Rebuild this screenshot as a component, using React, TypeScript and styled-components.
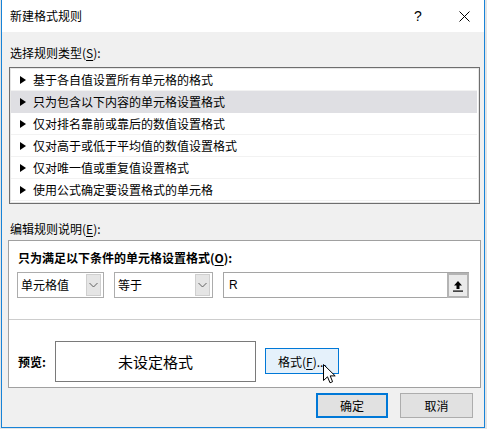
import React from "react";
import styled, { createGlobalStyle } from "styled-components";

const GlobalStyle = createGlobalStyle`
    html, body {
        margin: 0;
        padding: 0;
        background: #e4e4e4;
    }
    body {
        font-family: "Noto Sans CJK SC", "Microsoft YaHei", "Liberation Sans", sans-serif;
        font-size: 12px;
        color: #000;
    }
    u {
        text-underline-offset: 2px;
    }
`;

const Window = styled.div`
    box-sizing: border-box;
    width: 484px;
    height: 428px;
    margin-left: 1px;
    border: 1px solid #1883d7;
    border-top: none;
    background: #f0f0f0;
    display: flex;
    flex-direction: column;
`;

const TitleBar = styled.div`
    height: 32px;
    flex: none;
    background: #fff;
    display: flex;
    align-items: center;
    padding-left: 8px;
`;

const Title = styled.span`
    font-size: 12px;
    line-height: 18px;
    flex: 1;
`;

const TitleButton = styled.div<{ $width: number }>`
    width: ${props => props.$width}px;
    height: 32px;
    display: flex;
    align-items: center;
    justify-content: center;
    font-family: "Liberation Sans", sans-serif;
    font-size: 14px;
`;

const Body = styled.div`
    flex: 1;
    display: flex;
    flex-direction: column;
    padding: 0 4px 9px 7px;
`;

const SectionLabel = styled.div<{ $top: number }>`
    margin-top: ${props => props.$top}px;
    padding-left: 1px;
    line-height: 18px;
    height: 18px;
`;

const RuleList = styled.div`
    box-sizing: border-box;
    margin-top: 5px;
    width: 471px;
    height: 137px;
    border: 1px solid #6e6e6e;
    box-shadow: inset 0 0 0 1px #e6e6e6;
    background: #fff;
    padding: 1px 2px 0 1px;
`;

const RuleRow = styled.div<{ $selected?: boolean }>`
    box-sizing: border-box;
    height: 22px;
    display: flex;
    align-items: center;
    padding-left: 9px;
    gap: 6px;
    background: ${props => props.$selected ? '#dfdfe3' : '#fff'};
    border-bottom: 1px solid ${props => props.$selected ? '#dfdfe3' : '#f2f2f2'};
    white-space: nowrap;
`;

const Arrow = styled.span`
    width: 0;
    height: 0;
    border-top: 4px solid transparent;
    border-bottom: 4px solid transparent;
    border-left: 6px solid #000;
    margin-right: 1px;
`;

const EditPanel = styled.div`
    box-sizing: border-box;
    margin-top: 2px;
    margin-left: -1px;
    width: 473px;
    height: 148px;
    border: 1px solid #a0a0a0;
    background: #fff;
    padding: 8px 11px 5px 9px;
    display: flex;
    flex-direction: column;
`;

const PanelHeading = styled.div`
    font-weight: bold;
    line-height: 18px;
    height: 18px;
`;

const ConditionRow = styled.div`
    margin-top: 5px;
    display: flex;
    gap: 10px;
    margin-left: -1px;
`;

const Combo = styled.div<{ $width: number }>`
    box-sizing: border-box;
    width: ${props => props.$width}px;
    height: 26px;
    border: 1px solid #acacac;
    background: #fff;
    display: flex;
    align-items: center;
    padding: 1px 2px 1px 3px;
`;

const ComboText = styled.span`
    flex: 1;
    line-height: 18px;
`;

const DropButton = styled.div`
    box-sizing: border-box;
    width: 15px;
    height: 22px;
    background: #e5e5e5;
    border: 1px solid #cfcfcf;
    display: flex;
    align-items: center;
    justify-content: center;
`;

const ValueInput = styled.div`
    box-sizing: border-box;
    flex: 1;
    height: 26px;
    border: 1px solid #a5a5a5;
    border-right: none;
    display: flex;
    align-items: center;
    padding-left: 5px;
`;

const ValueText = styled.span`
    flex: 1;
    font-family: "Liberation Sans", sans-serif;
    font-size: 12px;
`;

const RefButton = styled.div`
    box-sizing: border-box;
    width: 22px;
    height: 25px;
    margin-top: 1px;
    border: 2px solid #b4b4b4;
    background: #eaeaea;
    display: flex;
    align-items: center;
    justify-content: center;
`;

const Divider = styled.div`
    height: 1px;
    background: #cdcdcd;
    margin: 21px -11px 0 -9px;
`;

const PreviewRow = styled.div`
    margin-top: 21px;
    display: flex;
    align-items: center;
`;

const PreviewLabel = styled.span`
    width: 37px;
    font-weight: bold;
`;

const PreviewBox = styled.div`
    box-sizing: border-box;
    width: 201px;
    height: 41px;
    border: 1px solid #7a7a7a;
    display: flex;
    align-items: center;
    justify-content: center;
    font-size: 15px;
`;

const FormatButton = styled.div`
    position: relative;
    box-sizing: border-box;
    margin-left: 9px;
    width: 74px;
    height: 26px;
    border: 1px solid #0078d7;
    background: #e5f1fb;
    display: flex;
    align-items: center;
    padding-left: 12px;
    margin-top: -1px;
`;

const Cursor = styled.svg`
    position: absolute;
    left: 57px;
    top: 15px;
`;

const Footer = styled.div`
    margin-top: 5px;
    display: flex;
    justify-content: flex-end;
    gap: 12px;
    padding-right: 7px;
`;

const DialogButton = styled.div<{ $primary?: boolean }>`
    box-sizing: border-box;
    width: ${props => props.$primary ? 72 : 73}px;
    height: 25px;
    border: ${props => props.$primary ? '2px solid #0078d7' : '1px solid #adadad'};
    background: #e1e1e1;
    display: flex;
    align-items: center;
    justify-content: center;
`;

const rules = [
    '基于各自值设置所有单元格的格式',
    '只为包含以下内容的单元格设置格式',
    '仅对排名靠前或靠后的数值设置格式',
    '仅对高于或低于平均值的数值设置格式',
    '仅对唯一值或重复值设置格式',
    '使用公式确定要设置格式的单元格',
];

const Chevron = () => (
    <svg width="9" height="6" viewBox="0 0 9 6">
        <path d="M0.5 1 L4.5 5 L8.5 1" fill="none" stroke="#606060" strokeWidth="1" />
    </svg>
);

const App = () => {
    return (
        <>
            <GlobalStyle />
            <Window>
                <TitleBar>
                    <Title>新建格式规则</Title>
                    <TitleButton $width={52}>?</TitleButton>
                    <TitleButton $width={40}>
                        <svg width="11" height="11" viewBox="0 0 11 11">
                            <path d="M0.5 0.5 L10.5 10.5 M10.5 0.5 L0.5 10.5" stroke="#000" strokeWidth="1" />
                        </svg>
                    </TitleButton>
                </TitleBar>
                <Body>
                    <SectionLabel $top={12}>选择规则类型(<u>S</u>):</SectionLabel>
                    <RuleList>
                        {rules.map((rule, i) => (
                            <RuleRow key={rule} $selected={i === 1}>
                                <Arrow />
                                {rule}
                            </RuleRow>
                        ))}
                    </RuleList>
                    <SectionLabel $top={16}>编辑规则说明(<u>E</u>):</SectionLabel>
                    <EditPanel>
                        <PanelHeading>只为满足以下条件的单元格设置格式(<u>O</u>):</PanelHeading>
                        <ConditionRow>
                            <Combo $width={87}>
                                <ComboText>单元格值</ComboText>
                                <DropButton><Chevron /></DropButton>
                            </Combo>
                            <Combo $width={99}>
                                <ComboText>等于</ComboText>
                                <DropButton><Chevron /></DropButton>
                            </Combo>
                            <ValueInput>
                                <ValueText>R</ValueText>
                                <RefButton>
                                    <svg width="10" height="12" viewBox="0 0 10 12">
                                        <path d="M5 1 L1 5.5 H3.5 V9 H6.5 V5.5 H9 Z" fill="#000" />
                                        <rect x="0" y="10.5" width="10" height="1.2" fill="#000" />
                                    </svg>
                                </RefButton>
                            </ValueInput>
                        </ConditionRow>
                        <Divider />
                        <PreviewRow>
                            <PreviewLabel>预览:</PreviewLabel>
                            <PreviewBox>未设定格式</PreviewBox>
                            <FormatButton>
                                格式(<u>F</u>)...
                                <Cursor width="13" height="20" viewBox="0 0 13 20">
                                    <path d="M0.5 0.5 L0.5 16.5 L4.5 12.8 L7 18.8 L9.6 17.7 L7.2 11.9 L12.2 11.9 Z" fill="#fff" stroke="#000" strokeWidth="1" strokeLinejoin="miter" />
                                </Cursor>
                            </FormatButton>
                        </PreviewRow>
                    </EditPanel>
                    <Footer>
                        <DialogButton $primary>确定</DialogButton>
                        <DialogButton>取消</DialogButton>
                    </Footer>
                </Body>
            </Window>
        </>
    );
};

export default App;
